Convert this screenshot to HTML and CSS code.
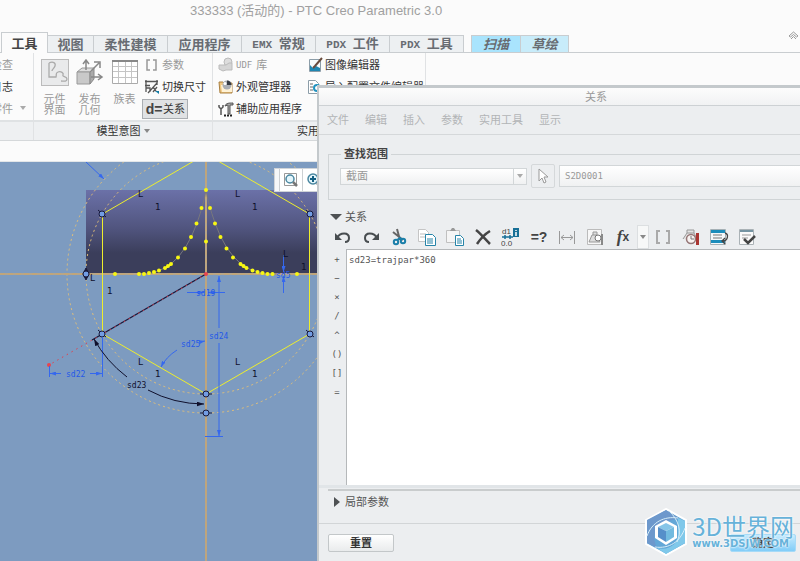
FILE: index.html
```
<!DOCTYPE html>
<html lang="zh-CN">
  <head>
    <meta charset="utf-8">
    <title>PTC Creo Parametric 3.0</title>
    <link rel="stylesheet" href="styles.css">
  </head>
  <body>
    <div class="titlebar">333333 (活动的) - PTC Creo Parametric 3.0</div>

    <div class="tabs">
      <button class="tab active">工具</button>
      <button class="tab short">视图</button>
      <button class="tab">柔性建模</button>
      <button class="tab">应用程序</button>
      <button class="tab"><span class="latin">EMX </span>常规</button>
      <button class="tab"><span class="latin">PDX </span>工件</button>
      <button class="tab"><span class="latin">PDX </span>工具</button>
      <button class="tab context first">扫描</button>
      <button class="tab context">草绘</button>
      <button class="collapse" aria-label="折叠">
        <svg width="11" height="9"><path d="M1 5 L5.500 1 L10 5 L8.500 6 L5.500 3.500 L2.500 6 Z M3 8 L5.500 5.500 L8 8" fill="none" stroke="#999"/></svg>
      </button>
    </div>

    <div class="ribbon">
      <div class="group group-check">
        <div class="tools">
          <div class="column">
            <button class="tool off">检查</button>
            <button class="tool">日志</button>
            <button class="tool off">零件</button>
          </div>
          <span class="caret"></span>
        </div>
        <div class="group-label"></div>
      </div>

      <div class="group group-model">
        <div class="tools">
          <button class="big">
            <svg width="28" height="27" viewBox="0 0 28 27"><rect x=".5" y=".5" width="27" height="26" fill="#e9eaeb" stroke="#bbb"/><path d="M8 4c4-2 7 0 6 3s-3 3-3 5M8 4v14h7c1-3-1-4 2-5s6 1 5 3 4 1 4 4-4 2-6 2" fill="none" stroke="#aaa" stroke-width="1.300"/></svg>
            <span>元件<br>界面</span>
          </button>
          <button class="big">
            <svg width="28" height="27" viewBox="0 0 28 27"><path d="M1 13l5-4h12l-4 4z" fill="#ddd" stroke="#999"/><path d="M1 13h13v12H1z" fill="#c9c9c9" stroke="#999"/><path d="M14 13l4-4v11l-4 5z" fill="#aaa" stroke="#888"/><path d="M10 11V2M7 5l3-4 3 4M15 12l8-8M18 3h6v6M15 18h11M22 15l4 3-4 3" fill="none" stroke="#888" stroke-width="1.500"/></svg>
            <span>发布<br>几何</span>
          </button>
          <button class="big">
            <svg width="26" height="27" viewBox="0 0 26 27"><path d="M.5 1.500h25v23H.5z" fill="#fff" stroke="#aaa"/><path d="M0 2h26" stroke="#888" stroke-width="2"/><path d="M1 7.500h24M1 12.500h24M1 18.500h24M6.500 3v21M13.500 3v21M19.500 3v21" stroke="#c5c5c5"/></svg>
            <span>族表</span>
          </button>
          <div class="column">
            <button class="tool off">
              <svg width="16" height="16"><path d="M6 3H3v10h3M9 3h3v10H9" fill="none" stroke="#999" stroke-width="1.500"/></svg>参数
            </button>
            <button class="tool">
              <svg width="16" height="16"><path d="M1 2.500h13M1 6.500h5M2 1v12M13 1v5M4 14L13 4M2 9h4v4M9 8l3 4M13 8l-4 5" fill="none" stroke="#555" stroke-width="1.300"/><path d="M11 12h4v3z" fill="#147ca5"/></svg>切换尺寸
            </button>
            <button class="tool pressed"><b class="d-equals">d=</b>关系</button>
          </div>
        </div>
        <div class="group-label">模型意图<span class="caret"></span></div>
      </div>

      <div class="group group-util">
        <div class="tools">
          <div class="column">
            <button class="tool off">
              <svg width="16" height="16"><circle cx="10" cy="5" r="4" fill="#ddd" stroke="#bbb"/><path d="M1 8h7l3-2h3v7H8l-3 1-4-2z" fill="#d5d5d5" stroke="#bbb"/></svg><span class="mono">UDF</span> 库
            </button>
            <button class="tool">
              <svg width="16" height="16"><path d="M1 3h4l1 1h8v10H2z" fill="#f0c883" stroke="#a98042"/><path d="M3 6h11v7H4z" fill="#fff2d5"/><circle cx="9" cy="6" r="4.500" fill="#aaaeb5"/><path d="M9 1.500A4.500 4.500 0 0 1 13.500 6H9z" fill="#363b43"/><circle cx="7" cy="4.500" r="1.500" fill="#fff"/></svg>外观管理器
            </button>
            <button class="tool">
              <svg width="16" height="16"><path d="M1 4v2l2 2 2-2V4M3 8v6" fill="none" stroke="#555" stroke-width="1.500"/><path d="M7 5c1-3 4-3 8-3v2h-3v9h-2V4z" fill="#aaa" stroke="#555"/><path d="M6 14.500h9" stroke="#222" stroke-width="2" stroke-dasharray="2 1"/></svg>辅助应用程序
            </button>
          </div>
          <div class="column second">
            <button class="tool">
              <svg width="16" height="16"><path d="M2.500 2.500h11v12h-11z" fill="#f8fafb" stroke="#8c9da8"/><path d="M3 8l3 3 3-2 4 2v3H3z" fill="#1f86b1"/><path d="M15 1L8 9l-2 2" fill="none" stroke="#684b3e" stroke-width="2"/></svg>图像编辑器
            </button>
            <button class="tool">
              <svg width="16" height="16"><path d="M1.500 1.500h7l3 3v10h-10z" fill="#fff" stroke="#8c9da8"/><path d="M3 5h3M3 8h3M3 11h3" stroke="#666"/><circle cx="10" cy="9" r="3" fill="none" stroke="#2293c0" stroke-width="2"/></svg>导入配置文件编辑器
            </button>
          </div>
        </div>
        <div class="group-label">实用工具</div>
      </div>
    </div>

    <div class="canvas">
      <svg class="sketch" width="320" height="399" viewBox="0 162 320 399">
        <defs>
          <linearGradient id="surface" x1="0" y1="0" x2="0" y2="1">
            <stop offset="0" stop-color="#6b71a8"/>
            <stop offset=".45" stop-color="#51557f"/>
            <stop offset=".75" stop-color="#3b3e5b"/>
            <stop offset="1" stop-color="#3b3e5b"/>
          </linearGradient>
          <marker id="arrow" viewBox="0 0 6 4" refX="6" refY="2" markerWidth="6" markerHeight="4" markerUnits="userSpaceOnUse" orient="auto-start-reverse">
            <path d="M0 0L6 2L0 4z" fill="#3568ee"/>
          </marker>
          <marker id="arrow-dark" viewBox="0 0 6 4" refX="6" refY="2" markerWidth="7" markerHeight="5" markerUnits="userSpaceOnUse" orient="auto-start-reverse">
            <path d="M0 0L6 2L0 4z" fill="#10102c"/>
          </marker>
        </defs>
        <rect x="86" y="190" width="240" height="84" fill="url(#surface)"/>

        <!-- construction circles and axes -->
        <g class="construction">
          <circle cx="206" cy="274" r="120"/>
          <circle cx="206" cy="274" r="139"/>
        </g>
        <path class="axis" d="M0 274H320M206 162V561"/>
        <path class="axis-dash" d="M0 274H320M206 162V561"/>

        <!-- hexagon -->
        <path class="hexagon" d="M206 394L102.500 334V214L206 154L309.500 214V334Z"/>

        <!-- bell curve -->
        <path class="curve" d="M139 274Q153 274 159 270.500Q166 268 171 264Q187 251 197 223Q204 203 206 190Q208 203 215 223Q225 251 241 264Q249 270 258 272Q265 274 277 274"/>
        <g class="points">
          <path d="M206 190h0M201.500 208h0M196.500 223.500h0M191 237h0M185 248.500h0M178 257.500h0M171 264h0M168 266h0M165 268h0M159 270.500h0M154 272h0M149 273h0M144 274h0M139 274h0M115 274h0"/>
          <path d="M210 208h0M215 223.500h0M220.500 237h0M226.500 248.500h0M233 257.500h0M240.500 264h0M243.500 266h0M246.500 268h0M252.500 270.500h0M257.500 272h0M262.500 273h0M267.500 274h0M272.500 274h0M297 274h0M206 241.500h0"/>
        </g>

        <!-- trajectory line -->
        <path d="M206 274L92 340" stroke="#17173a" stroke-width="1.300"/>
        <path d="M206 274L49 365" stroke="#e0404d" stroke-dasharray="1.500 4"/>
        <circle cx="206" cy="274" r="2" fill="#e8444f"/>
        <circle cx="49" cy="365" r="2" fill="#e8444f"/>

        <!-- vertices -->
        <g class="vertices">
          <path class="tick" d="M86 268l3 6-3 6-3-6zM200 394h12M200 413h12M98 210l8 7M306 210l8 7M98 330l8 7M306 330l8 7"/>
          <circle cx="86" cy="274" r="3"/>
          <circle cx="102" cy="214" r="3"/>
          <circle cx="310" cy="214" r="3"/>
          <circle cx="102" cy="334" r="3"/>
          <circle cx="310" cy="334" r="3"/>
          <circle cx="206" cy="394" r="3"/>
          <circle cx="206" cy="413" r="3"/>
        </g>

        <!-- dimensions -->
        <g class="dimension">
          <path d="M86 162L104 179" marker-end="url(#arrow)"/>
          <path d="M187 292.500H204" marker-end="url(#arrow)"/>
          <path d="M225 292.500H208" marker-end="url(#arrow)"/>
          <path d="M219 276V328" marker-start="url(#arrow)"/>
          <path d="M219 343V436" marker-end="url(#arrow)"/>
          <path d="M205 436.500H223"/>
          <path d="M283.500 255V272" marker-end="url(#arrow)"/>
          <path d="M283.500 293V276" marker-end="url(#arrow)"/>
          <path d="M102.500 337V377M49.500 366V377"/>
          <path d="M50 373.500H61" marker-start="url(#arrow)"/>
          <path d="M90 373.500H102" marker-end="url(#arrow)"/>
          <path d="M177 350Q166 357 161 367" marker-end="url(#arrow)"/>
          <path d="M200 342l5-1" marker-end="url(#arrow)"/>
          <text x="196" y="296">sd19</text>
          <text x="209" y="339">sd24</text>
          <text x="181" y="347">sd25</text>
          <text x="66" y="377">sd22</text>
          <text x="276" y="278">sd5</text>
        </g>
        <g class="dimension dark">
          <path d="M94 339Q106 361 127 377" marker-start="url(#arrow-dark)"/>
          <path d="M148 390Q174 404 204 404" marker-end="url(#arrow-dark)"/>
          <text x="127" y="388">sd23</text>
        </g>
        <g class="constraints">
          <text x="138" y="197">L</text><text x="155" y="210">1</text>
          <text x="235" y="197">L</text><text x="252" y="210">1</text>
          <text x="90" y="281">L</text><text x="107" y="294">1</text>
          <text x="283" y="257">L</text><text x="301" y="270">1</text>
          <text x="138" y="365">L</text><text x="155" y="377">1</text>
          <text x="235" y="365">L</text><text x="252" y="377">1</text>
        </g>
      </svg>

      <div class="view-bar">
        <button aria-label="重新调整">
          <svg width="16" height="16"><path d="M1.500 1.500h12v12h-12z" fill="#fff" stroke="#999"/><circle cx="7" cy="7" r="4" fill="#e3f5fb" stroke="#4a87a0" stroke-width="1.500"/><path d="M10 10l4 4" stroke="#777" stroke-width="2.500"/></svg>
        </button>
        <button aria-label="放大">
          <svg width="16" height="16"><circle cx="7" cy="7" r="5" fill="#e3f5fb" stroke="#4a87a0" stroke-width="1.500"/><path d="M4 7h6M7 4v6" stroke="#145f83" stroke-width="2"/><path d="M11 11l4 4" stroke="#777" stroke-width="2.500"/></svg>
        </button>
      </div>
    </div>

    <div class="dialog" role="dialog" aria-labelledby="dialog-title">
      <div class="dialog-title" id="dialog-title">关系</div>
      <div class="menu">
        <span>文件</span>
        <span>编辑</span>
        <span>插入</span>
        <span>参数</span>
        <span>实用工具</span>
        <span>显示</span>
      </div>

      <fieldset class="scope">
        <legend>查找范围</legend>
        <div class="scope-row">
          <div class="select">
            <select aria-label="查找范围"><option>截面</option></select>
            <span class="caret"></span>
          </div>
          <button class="pick" aria-label="选择">
            <svg width="12" height="17"><path d="M2 1v12l3-3 2 5 2-1-2-5h4z" fill="#fff" stroke="#999"/></svg>
          </button>
          <input class="name mono" type="text" value="S2D0001" aria-label="名称">
        </div>
      </fieldset>

      <div class="section"><span class="triangle down"></span>关系</div>

      <div class="toolbar">
        <button aria-label="撤消"><svg width="18" height="18"><path d="M3 10C6 4 15 4 15 10c0 3-2 4-4 4" fill="none" stroke="#484d50" stroke-width="2"/><path d="M1 5v7h7z" fill="#484d50"/></svg></button>
        <button aria-label="重做"><svg width="18" height="18"><path d="M15 10C12 4 3 4 3 10c0 3 2 4 4 4" fill="none" stroke="#484d50" stroke-width="2"/><path d="M17 5v7h-7z" fill="#484d50"/></svg></button>
        <button aria-label="剪切"><svg width="18" height="18"><path d="M7 1l3 11M3 4l10 8" stroke="#666" stroke-width="2"/><circle cx="6" cy="14" r="2.200" fill="none" stroke="#1b7fa9" stroke-width="2"/><circle cx="13" cy="13" r="2.200" fill="none" stroke="#1b7fa9" stroke-width="2"/><path d="M7 12l3-2 2 2" fill="none" stroke="#1b7fa9" stroke-width="2"/></svg></button>
        <button aria-label="复制"><svg width="20" height="20"><path d="M1.500 2.500h7l3 3v9h-10z" fill="#fff" stroke="#c5c5c5"/><path d="M3 7h6M3 10h6" stroke="#bbb"/><path d="M8.500 7.500h7l3 3v8h-10z" fill="#fff" stroke="#2684a8"/><path d="M10 12h6M10 14h6M10 16h6" stroke="#2684a8"/></svg></button>
        <button aria-label="粘贴"><svg width="20" height="20"><path d="M1.500 3.500h13v12h-13z" fill="#f5f5f5" stroke="#c0c0c0"/><path d="M5 4l2-3h2l2 3z" fill="#999"/><path d="M10.500 8.500h5l3 3v7h-8z" fill="#fff" stroke="#2684a8"/><path d="M12 12h4M12 14h5M12 16h5" stroke="#2684a8"/></svg></button>
        <button aria-label="删除"><svg width="18" height="18"><path d="M2 2c4 3 9 9 14 14" stroke="#454545" stroke-width="2.500" fill="none"/><path d="M16 3C11 6 7 10 3 16" stroke="#454545" stroke-width="2.500" fill="none"/></svg></button>
        <button aria-label="切换尺寸"><svg width="20" height="20"><path d="M12 1h6v9h-6z" fill="#176f96"/><path d="M15 3v1M15 5v4" stroke="#fff" stroke-width="1.500"/><path d="M1 10h11M4 8v4M9 8v4" stroke="#176f96" stroke-width="1.500"/><text class="icon-text" x="1" y="7">d1</text><text class="icon-text" x="0" y="19">0.0</text></svg></button>
        <button class="evaluate" aria-label="计算">=?</button>
        <button aria-label="尺寸"><svg width="18" height="18"><path d="M1.500 3v13M16.500 3v13M3 9.500h12M6 7l-3 2.500L6 12M12 7l3 2.500-3 2.500" fill="none" stroke="#999"/></svg></button>
        <button aria-label="单位"><svg width="18" height="18"><path d="M1.500 1.500h14v15h-14z" fill="#f7f7f7" stroke="#bbb"/><path d="M3 14l3-7h5l3 7zM7 7V4h4v3" fill="#ddd" stroke="#999"/><circle cx="12" cy="10" r="3" fill="#fff" stroke="#777"/><path d="M16 6v11" stroke="#888" stroke-width="2"/></svg></button>
        <button class="fx" aria-label="函数"><i>f</i>x</button>
        <button class="drop" aria-label="更多函数"><span class="caret"></span></button>
        <button aria-label="括号"><svg width="18" height="18"><path d="M6 3H3v12h3M12 3h3v12h-3" fill="none" stroke="#aaa" stroke-width="2"/></svg></button>
        <button aria-label="单位检查"><svg width="18" height="18"><path d="M1 11L5 5h7l3 6M5 5V2h7v3" fill="#e4e4e4" stroke="#999"/><circle cx="9" cy="11" r="4.500" fill="#f8f3f2" stroke="#967777" stroke-width="1.500"/><path d="M9 8v3h3" fill="none" stroke="#777"/><path d="M15.500 5v12" stroke="#aa3632" stroke-width="3"/></svg></button>
        <button aria-label="排序"><svg width="20" height="18"><path d="M1.500 1.500h15v15h-15z" fill="#f5f8fa" stroke="#a5b0b5"/><path d="M2 3.500h14M2 13.500h14" stroke="#1c8dbb" stroke-width="3"/><path d="M4 7h9M4 10h9" stroke="#777"/><path d="M16 5c4 1 3 8-2 8M16 10l-3 3 3 3" fill="none" stroke="#444" stroke-width="1.300"/></svg></button>
        <button aria-label="校验"><svg width="18" height="18"><path d="M1.500 1.500h14v15h-14z" fill="#fafafa" stroke="#aab2b6"/><path d="M2 3h13" stroke="#7594a2" stroke-width="2"/><path d="M4 7h9M4 10h6" stroke="#999"/><path d="M6 11l4 4 7-7" fill="none" stroke="#444" stroke-width="2.500"/></svg></button>
      </div>

      <div class="editor">
        <div class="operators mono">
          <button>+</button>
          <button>−</button>
          <button>×</button>
          <button>/</button>
          <button>^</button>
          <button>()</button>
          <button>[]</button>
          <button>=</button>
        </div>
        <textarea class="mono" aria-label="关系" spellcheck="false">sd23=trajpar*360</textarea>
      </div>

      <div class="section local"><span class="triangle"></span>局部参数</div>

      <div class="buttons">
        <button>重置</button>
        <button class="ok">确定</button>
      </div>
    </div>

    <div class="watermark">
      <svg width="42" height="48" viewBox="0 0 42 48">
        <path d="M21 1L41 12V36L21 47L1 36V12Z" fill="#63a7d7" stroke="#fff" stroke-width="2"/>
        <path d="M21 2L2 12V35L12 40C7 29 9 18 21 14L34 10Z" fill="#6d98cc"/>
        <path d="M33 10L40 13V35L21 46L12 40C24 43 34 36 33 24Z" fill="#7fc8ea"/>
        <path d="M2 28C7 14 19 8 33 10M24 3C34 12 37 24 32 34M40 20C35 34 24 41 10 39" fill="none" stroke="#d5edf8"/>
        <path d="M21 12L32 18V30L21 37L10 30V18Z" fill="#fff"/>
        <path d="M21 15L29 19L21 23L13 19Z" fill="#86c5e8"/>
        <path d="M13 19L21 23V34L13 29Z" fill="#568fc9"/>
        <path d="M29 19L21 23V34L29 29Z" fill="#72badf"/>
      </svg>
      <div>
        <div class="watermark-name">3D世界网</div>
        <div class="watermark-url">www.3DSJW.COM</div>
      </div>
    </div>
  </body>
</html>
```
FILE: styles.css
```
* {
  box-sizing: border-box;
}
body {
  display: flex;
  flex-direction: column;
  position: relative;
  height: 100vh;
  margin: 0;
  overflow: hidden;
  background: #fbfbfb;
  color: #333;
  font: 11px/14px "Liberation Sans", "Noto Sans CJK SC", sans-serif;
}
button, input, select, textarea {
  margin: 0;
  padding: 0;
  border: 0;
  border-radius: 0;
  background: none;
  color: inherit;
  font: inherit;
}
svg {
  display: block;
  flex: none;
}
.mono {
  font-family: "DejaVu Sans Mono", "Noto Sans CJK SC", monospace;
  font-size: 9px;
}
.caret {
  border: 3px solid transparent;
  border-top: 4px solid #888;
  border-bottom: 0;
}

/* Title and tabs */
.titlebar {
  height: 32px;
  padding: 4px 0 0 190px;
  color: #a0a0a0;
  font-size: 13px;
}
.tabs {
  display: flex;
  align-items: flex-end;
  height: 21px;
  padding-left: 1px;
  border-bottom: 1px solid #c9cdd0;
}
.tab {
  width: 74px;
  height: 17px;
  border: 1px solid #c9cdd0;
  border-width: 1px 1px 0 0;
  background: #edf0f2;
  color: #686c72;
  font-size: 13px;
  font-weight: bold;
  line-height: 15px;
  white-space: pre;
}
.tab.active {
  width: 47px;
  height: 21px;
  margin-bottom: -1px;
  border-left-width: 1px;
  background: #fbfbfb;
  color: #444;
}
.tab.short {
  width: 46px;
}
.tab .latin {
  font-family: "Liberation Mono", monospace;
  font-size: 11px;
}
.tab.context {
  width: 48px;
  background: #c8ecfa;
  font-style: italic;
}
.tab.context.first {
  width: 50px;
  margin-left: 7px;
  border-left-width: 1px;
  background: #a9e4fd;
}
.collapse {
  margin: 0 1px 12px auto;
}

/* Ribbon */
.ribbon {
  display: flex;
  height: 88px;
  border-bottom: 1px solid #d5d8da;
}
.group {
  display: flex;
  flex-direction: column;
  border-right: 1px solid #e0e2e4;
}
.group-check {
  width: 34px;
}
.group-model {
  width: 179px;
}
.group-util {
  width: 213px;
}
.tools {
  display: flex;
  flex: 1;
  align-items: flex-start;
}
.group-label {
  display: flex;
  align-items: center;
  justify-content: center;
  gap: 3px;
  height: 20px;
  border-top: 2px solid #dfe2e4;
  background: #eef0f2;
}
.column {
  display: flex;
  flex-direction: column;
  align-items: flex-start;
  gap: 2px;
  padding-top: 2px;
}
.tool {
  display: flex;
  align-items: center;
  height: 20px;
  padding: 0 2px;
  white-space: nowrap;
}
.tool svg {
  margin-right: 2px;
}
.tool .mono {
  margin-right: 4px;
}
.off {
  color: #999;
}
.group-check .column {
  align-items: flex-end;
  width: 14px;
  overflow: hidden;
}
.group-check .tool {
  padding: 0;
}
.group-check .tools .caret {
  align-self: flex-end;
  margin: 0 7px 10px;
  border-top-color: #aaa;
}
.group-model .tools {
  padding-left: 3px;
}
.big {
  display: flex;
  flex-direction: column;
  align-items: center;
  gap: 8px;
  width: 35px;
  padding-top: 6px;
  color: #999;
  line-height: 11px;
}
.pressed {
  border: 1px solid #aaaeb2;
  background: #e0e2e4;
}
.d-equals {
  width: 18px;
  color: #444;
  font-size: 14px;
}
.group-util .tools {
  padding-left: 3px;
}
.second {
  margin-left: 1px;
}

/* Sketch area */
.canvas {
  position: relative;
  flex: 1;
  margin-top: 20px;
  border-top: 1px solid #e3e6e8;
  background: #7d9bc0;
}
.construction circle {
  fill: none;
  stroke: #e3c078;
  stroke-dasharray: 2 3;
}
.axis {
  stroke: #b7a588;
  stroke-width: 2;
}
.axis-dash {
  stroke: #c9a56c;
  stroke-dasharray: 5 3;
}
.hexagon {
  fill: none;
  stroke: #eeee2c;
}
.curve {
  fill: none;
  stroke: #77777d;
}
.points {
  stroke: #f7f713;
  stroke-width: 4;
  stroke-linecap: round;
}
.vertices circle {
  fill: #729de4;
  stroke: #18183a;
}
.vertices .tick {
  fill: #18183a;
  stroke: #18183a;
}
.dimension path {
  fill: none;
  stroke: #3568ee;
}
.dimension text {
  fill: #2459e8;
  font: 8px "DejaVu Sans Mono", monospace;
}
.dimension.dark path {
  stroke: #10102c;
}
.dimension.dark text, .constraints text {
  fill: #10102c;
}
.constraints text {
  font: 9px "DejaVu Sans", sans-serif;
}
.view-bar {
  display: flex;
  position: absolute;
  top: 6px;
  left: 274px;
  height: 24px;
  padding-left: 4px;
  border: 1px solid #d0d4d8;
  background: #f5f7f8;
}
.view-bar button {
  width: 23px;
  padding-left: 3px;
  border-left: 1px solid #ccd0d3;
  background: #fff;
}

/* Relations window */
.dialog {
  display: flex;
  flex-direction: column;
  position: absolute;
  top: 85px;
  right: 0;
  bottom: 0;
  left: 317px;
  border: solid #c4c9cc;
  border-width: 3px 0 0 2px;
  background: #eceef0;
  color: #555;
}
.dialog-title {
  height: 18px;
  padding-left: 266px;
  border-bottom: 1px solid #cdd1d4;
  background: linear-gradient(#fcfcfc, #f1f2f3);
  color: #999;
  line-height: 18px;
}
.menu {
  display: flex;
  gap: 16px;
  height: 29px;
  padding: 7px 8px;
  border-bottom: 1px solid #d5d8da;
  color: #b2b4b6;
}
.scope {
  height: 53px;
  margin: 12px 0 0 9px;
  padding: 0 0 0 11px;
  border: 1px solid #d0d4d6;
  border-right: 0;
}
.scope legend {
  margin-left: 1px;
  padding: 0 3px;
  color: #444;
  font-weight: bold;
}
.scope-row {
  display: flex;
  align-items: center;
  gap: 4px;
  padding-top: 3px;
}
.select {
  display: flex;
  align-items: center;
  width: 187px;
  height: 17px;
  border: 1px solid #d2d6d8;
  background: linear-gradient(#fff, #f0f1f2);
}
.select select {
  flex: 1;
  height: 15px;
  padding-left: 5px;
  border-right: 1px solid #d2d6d8;
  color: #999;
  line-height: 15px;
  appearance: none;
}
.select .caret {
  margin: 0 3px;
  border-top-color: #aaa;
}
.pick {
  display: flex;
  align-items: center;
  justify-content: center;
  width: 24px;
  height: 24px;
  border: 1px solid #d5d8da;
  border-radius: 2px;
}
.name {
  flex: 1;
  min-width: 0;
  height: 22px;
  padding: 0 5px;
  border: 1px solid #d2d6d8;
  border-right: 0;
  background: linear-gradient(#fff, #f0f1f2);
  color: #999;
}
.section {
  display: flex;
  align-items: center;
  gap: 4px;
  padding: 10px 0 1px 11px;
}
.triangle {
  border: 5px solid transparent;
  border-left: 6px solid #4e5153;
  border-right: 0;
}
.triangle.down {
  border: 6px solid transparent;
  border-top: 6px solid #4e5153;
  border-bottom: 0;
  margin-right: -1px;
}
.toolbar {
  display: flex;
  align-items: center;
  height: 24px;
  padding-left: 10px;
}
.toolbar button {
  display: flex;
  align-items: center;
  justify-content: center;
  width: 28px;
  height: 24px;
}
.icon-text {
  fill: #444;
  font: 8px "Liberation Sans", sans-serif;
}
.toolbar .evaluate {
  color: #444;
  font-size: 14px;
  font-weight: bold;
}
.toolbar .fx {
  color: #444;
  font: bold 12px "Liberation Sans", sans-serif;
}
.fx i {
  font: italic bold 17px "Liberation Serif", serif;
}
.toolbar .drop {
  width: 12px;
  border: 1px solid #dcdfe1;
  background: #f7f8f8;
}
.editor {
  display: flex;
  flex: 1;
  min-height: 0;
  border-bottom: 3px solid #e1e5e8;
}
.operators {
  display: flex;
  flex-direction: column;
  width: 27px;
  padding-left: 9px;
}
.operators button {
  height: 19px;
}
.editor textarea {
  flex: 1;
  padding: 4px 2px;
  border: 1px solid #b5b8ba;
  border-width: 1px 0 0 1px;
  outline: 0;
  background: #fff;
  line-height: 12px;
  resize: none;
}
.local {
  height: 34px;
  margin: 1px 0 0 9px;
  padding: 0 0 10px 6px;
  border-top: 2px solid #c9cccd;
  gap: 5px;
}
.buttons {
  display: flex;
  justify-content: space-between;
  height: 38px;
  padding: 10px 4px 10px 9px;
  border-top: 1px solid #d2d5d7;
}
.buttons button {
  width: 66px;
  height: 18px;
  border: 1px solid #c3c7c9;
  border-radius: 2px;
  background: linear-gradient(#fff, #e9ebec);
  color: #333;
  font-weight: bold;
  line-height: 14px;
}
.buttons .ok {
  border-color: #a5daf7;
  background: linear-gradient(#c5eafd, #81cdf8);
}

/* Watermark */
.watermark {
  display: flex;
  gap: 5px;
  position: absolute;
  right: 6px;
  bottom: 5px;
  color: #67b2d9;
  text-shadow: 0 0 2px #fff, 0 0 2px #fff;
  pointer-events: none;
}
.watermark-name {
  padding-top: 5px;
  font: 24px/25px "Noto Sans CJK SC", sans-serif;
}
.watermark-url {
  font: bold 10px/12px "DejaVu Sans", sans-serif;
}
```
